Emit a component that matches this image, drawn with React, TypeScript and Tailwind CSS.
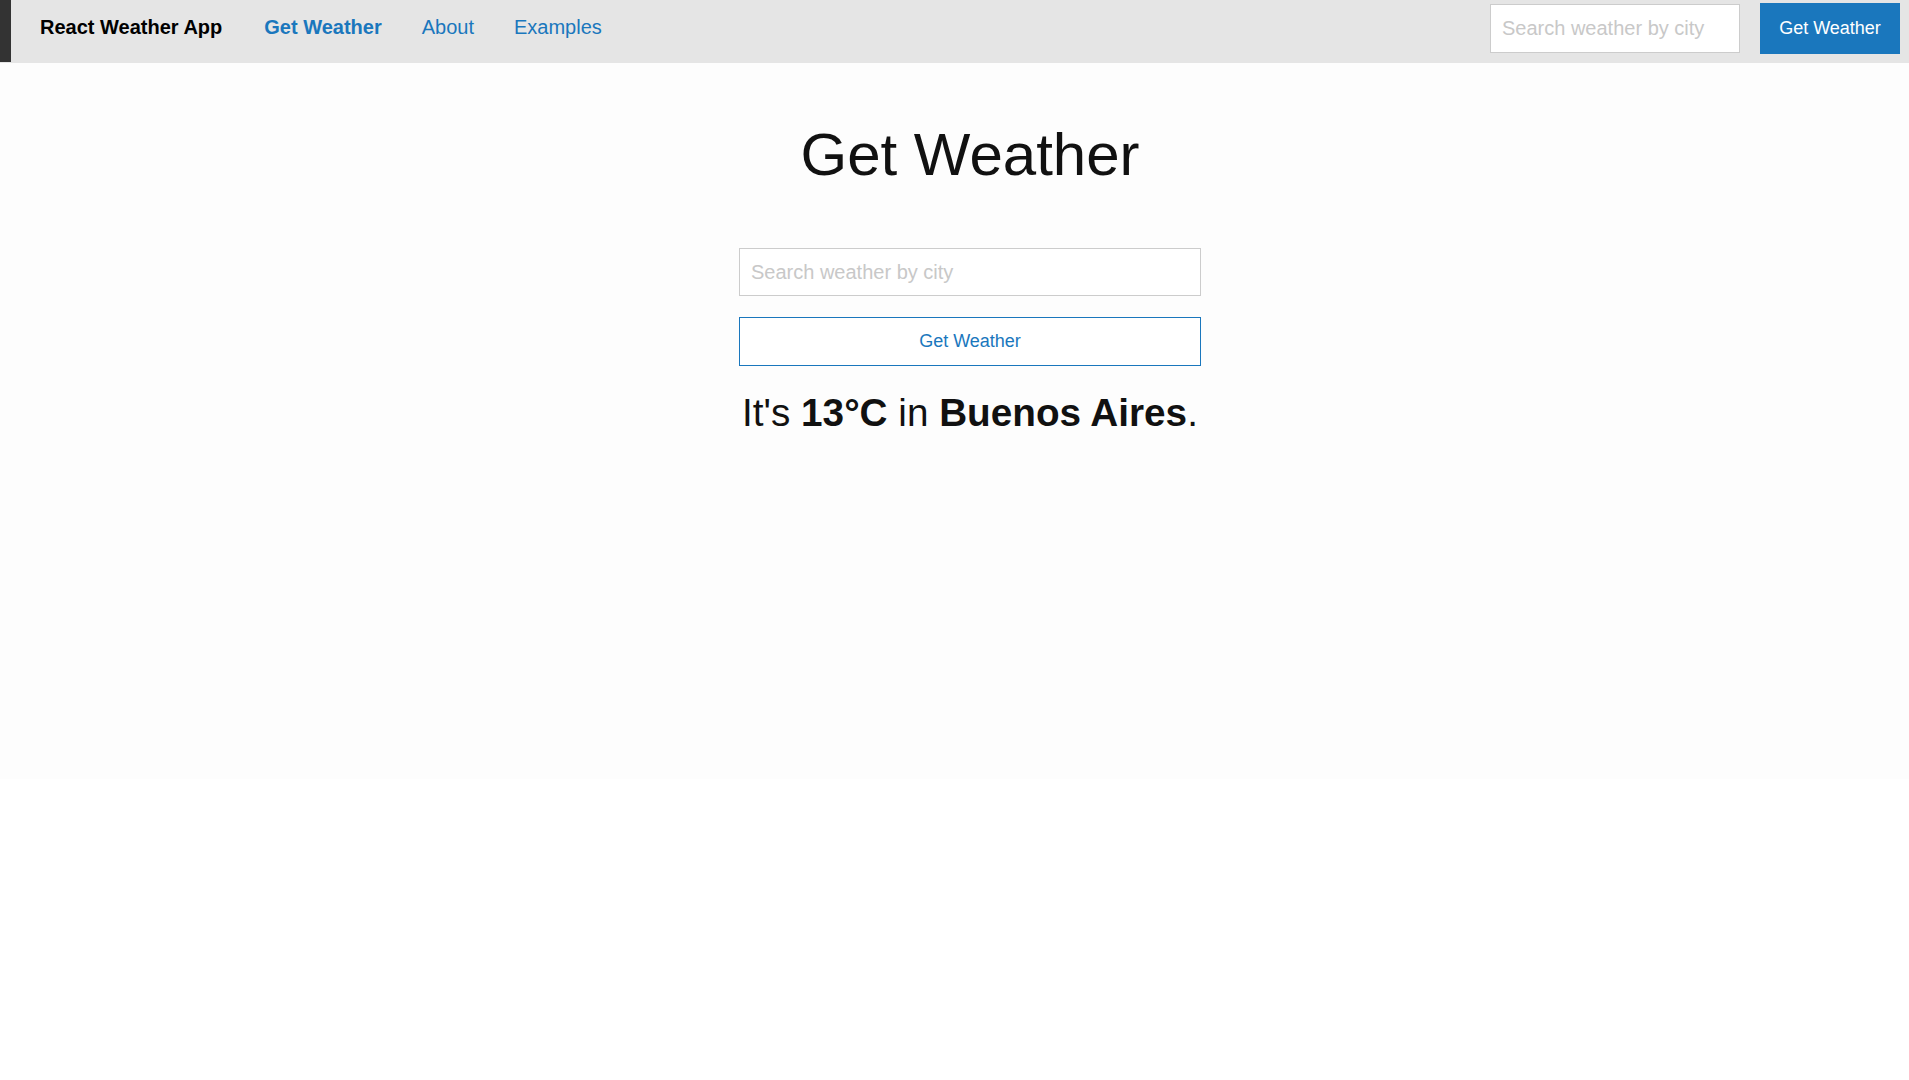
import { useState } from "react";

const links = [
  { label: "Get Weather", active: true },
  { label: "About", active: false },
  { label: "Examples", active: false },
];

function Nav() {
  return (
    <nav className="flex h-[63px] bg-[#e5e5e5]">
      <div className="w-[11px] h-[62px] bg-[#333333]" />
      <div className="flex flex-1 items-start justify-between">
        <div className="flex items-start pt-[16px] pl-[29px] text-[20px] leading-[22px]">
          <a href="#" className="font-bold text-black">React Weather App</a>
          <div className="flex ml-[42px] gap-[40px]">
            {links.map((l) => (
              <a
                key={l.label}
                href="#"
                className={`text-[#1a77bd] ${l.active ? "font-bold" : ""}`}
              >
                {l.label}
              </a>
            ))}
          </div>
        </div>
        <form className="flex items-start gap-[20px] pr-[9px]" onSubmit={(e) => e.preventDefault()}>
          <input
            type="text"
            placeholder="Search weather by city"
            className="mt-[4px] w-[250px] h-[49px] border border-[#cccccc] bg-white px-[11px] text-[20px] text-[#333] placeholder:text-[#c8c8c8] outline-none"
          />
          <button className="mt-[3px] w-[140px] h-[51px] bg-[#1a77bd] text-white text-[18px]">
            Get Weather
          </button>
        </form>
      </div>
    </nav>
  );
}

export default function App() {
  const [city, setCity] = useState("");
  return (
    <div className="min-h-screen bg-white font-['Liberation_Sans',Arial,sans-serif]">
      <Nav />
      <main className="min-h-[716px] bg-[#fdfdfd] pl-[31px]">
        <div className="flex flex-col items-center pt-[60px]">
          <h1 className="text-[60px] leading-[63px] text-[#111111]">Get Weather</h1>
          <form className="mt-[62px] flex flex-col w-[462px] gap-[21px]" onSubmit={(e) => e.preventDefault()}>
            <input
              type="text"
              value={city}
              onChange={(e) => setCity(e.target.value)}
              placeholder="Search weather by city"
              className="h-[48px] border border-[#cccccc] bg-white px-[11px] text-[20px] text-[#333] placeholder:text-[#c8c8c8] outline-none"
            />
            <button className="h-[49px] border border-[#1a77bd] bg-white text-[18px] text-[#1a77bd]">
              Get Weather
            </button>
          </form>
          <p className="mt-[26px] text-[38.7px] leading-[42px] text-[#111111]">
            It's <b>13°C</b> in <b>Buenos Aires</b>.
          </p>
        </div>
      </main>
    </div>
  );
}
